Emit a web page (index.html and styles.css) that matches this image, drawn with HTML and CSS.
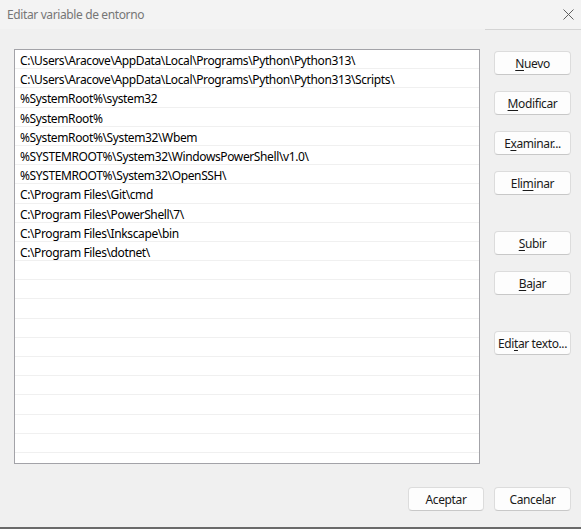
FILE: index.html
```html
<!DOCTYPE html>
<html lang="es">
<head>
<meta charset="utf-8">
<link rel="stylesheet" href="styles.css">
</head>
<body>
<div class="window">
  <div class="titlebar">
    <span class="title">Editar variable de entorno</span>
    <svg class="close" width="11" height="11" viewBox="0 0 11 11"><path d="M0.5 0.5 L10.5 10.5 M10.5 0.5 L0.5 10.5" stroke="#5f5f5f" stroke-width="1" fill="none"/></svg>
  </div>
  <div class="rule"></div>
  <div class="main">
    <div class="list">
      <div class="row">C:\Users\Aracove\AppData\Local\Programs\Python\Python313\</div>
      <div class="row">C:\Users\Aracove\AppData\Local\Programs\Python\Python313\Scripts\</div>
      <div class="row">%SystemRoot%\system32</div>
      <div class="row">%SystemRoot%</div>
      <div class="row">%SystemRoot%\System32\Wbem</div>
      <div class="row">%SYSTEMROOT%\System32\WindowsPowerShell\v1.0\</div>
      <div class="row">%SYSTEMROOT%\System32\OpenSSH\</div>
      <div class="row">C:\Program Files\Git\cmd</div>
      <div class="row">C:\Program Files\PowerShell\7\</div>
      <div class="row">C:\Program Files\Inkscape\bin</div>
      <div class="row">C:\Program Files\dotnet\</div>
      <div class="row"></div><div class="row"></div><div class="row"></div><div class="row"></div>
      <div class="row"></div><div class="row"></div><div class="row"></div><div class="row"></div>
      <div class="row"></div><div class="row"></div>
    </div>
    <div class="side">
      <div class="group">
        <button class="btn"><u>N</u>uevo</button>
        <button class="btn"><u>M</u>odificar</button>
        <button class="btn">E<u>x</u>aminar...</button>
        <button class="btn">Eli<u>m</u>inar</button>
      </div>
      <div class="group">
        <button class="btn"><u>S</u>ubir</button>
        <button class="btn"><u>B</u>ajar</button>
      </div>
      <div class="group">
        <button class="btn">Edi<u>t</u>ar texto...</button>
      </div>
    </div>
  </div>
  <div class="footer">
    <button class="btn ok">Aceptar</button>
    <button class="btn">Cancelar</button>
  </div>
</div>
<div class="taskedge"></div>
</body>
</html>
```
FILE: styles.css
```css
html, body {
  margin: 0;
  padding: 0;
}
body {
  width: 581px;
  height: 529px;
  overflow: hidden;
  background: #f0f0f0;
  font-family: "Noto Sans", "Open Sans", sans-serif;
  font-size: 12px;
  letter-spacing: -0.38px;
  color: #000;
}
.window {
  height: 527px;
  display: flex;
  flex-direction: column;
}
.titlebar {
  height: 29px;
  background: #f3f3f3;
  display: flex;
  align-items: center;
  justify-content: space-between;
  padding: 0 7px 0 7px;
}
.title {
  color: #767676;
  font-size: 12px;
  margin-top: -1px;
}
.close {
  margin-top: -1px;
}
.rule {
  height: 1px;
  margin-left: 485px;
  background: #d4d4d4;
}
.main {
  display: flex;
  padding: 19px 0 0 14px;
}
.list {
  width: 464px;
  height: 413px;
  border: 1px solid #a3a3a8;
  background: #fff;
  overflow: hidden;
}
.row {
  height: 18.2px;
  line-height: 21px;
  border-bottom: 1px solid #f0f0f0;
  padding-left: 5px;
  white-space: nowrap;
}
.side {
  margin-left: 14px;
  padding-top: 2px;
  display: flex;
  flex-direction: column;
  gap: 36px;
}
.group {
  display: flex;
  flex-direction: column;
  gap: 16px;
}
.btn {
  width: 77px;
  height: 24px;
  padding: 0;
  background: #fdfdfd;
  border: 1px solid #dcdcdc;
  border-bottom-color: #c8c8c8;
  border-radius: 4px;
  font-family: inherit;
  font-size: 12px;
  letter-spacing: -0.38px;
  color: #1a1a1a;
  text-align: center;
  white-space: nowrap;
}
.btn u {
  text-underline-offset: 2px;
}
.footer {
  margin-top: auto;
  display: flex;
  justify-content: flex-end;
  gap: 10px;
  padding: 0 10px 16px 0;
}
.ok {
  width: 76px;
}
.taskedge {
  height: 2px;
  background: #6a6a6a;
}
```
